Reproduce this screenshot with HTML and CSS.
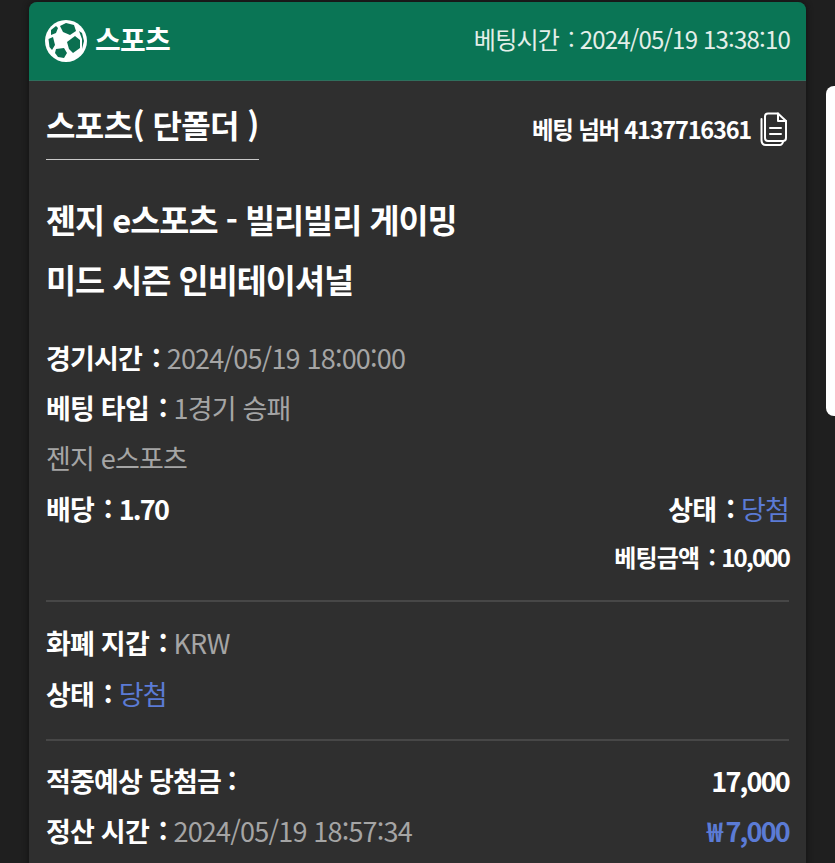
FILE: index.html
```html
<!doctype html>
<html lang="ko">
<head>
<meta charset="utf-8">
<title>베팅 내역</title>
<link rel="stylesheet" href="styles.css">
</head>
<body>
<div class="side-panel"></div>
<div class="card">
  <div class="card-head">
    <div class="brand">
      <svg class="ball" viewBox="0 0 42 42" width="42" height="42">
        <circle cx="21" cy="21" r="21" fill="#fff"/>
        <g fill="#0b6f50">
          <path d="M15 6 L21 3 L29 5 L31 11 L25 15 L18 12 Z"/>
          <path d="M6 10 L11 6 L13 8 L11 13 L6 15 Z"/>
          <path d="M3.500 19 L8 17 L10 25 L7 30 L4.500 27 Z"/>
          <path d="M11 29 L19 28 L22 33 L19 38 L13 37 L10 33 Z"/>
          <path d="M22 22 L30 16 L35 20 L35 28 L28 33 L24 29 Z"/>
          <path d="M34 11 L37 13 L39 21 L37 29 L37 19 Z"/>
        </g>
      </svg>
      <span class="brand-name">스포츠</span>
    </div>
    <div class="bet-time">베팅시간 <span class="colon">:</span> 2024/05/19 13:38:10</div>
  </div>
  <div class="card-body">
    <div class="title-row">
      <h2 class="kind">스포츠( 단폴더 )</h2>
      <div class="bet-no">
        베팅 넘버 4137716361
        <svg class="copy" viewBox="0 0 27 34" width="27" height="34" fill="none" stroke="#fff" stroke-width="2" stroke-linejoin="round" stroke-linecap="round">
          <path d="M8 1.500 H18 L26 9 V26 Q26 29 23 29 H8 Q5 29 5 26 V4.500 Q5 1.500 8 1.500 Z"/>
          <path d="M18 1.500 V9 H26"/>
          <path d="M1.500 7 V28 Q1.500 33 6 33 H20 Q22 33 23 30"/>
          <path d="M10 16 H21 M10 22 H21"/>
        </svg>
      </div>
    </div>
    <h1 class="match">젠지 e스포츠 - 빌리빌리 게이밍<br>미드 시즌 인비테이셔널</h1>

    <div class="row"><span><b>경기시간 <span class="colon">:</span></b> <span class="val">2024/05/19 18:00:00</span></span></div>
    <div class="row"><span><b>베팅 타입 <span class="colon">:</span></b> <span class="val">1경기 승패</span></span></div>
    <div class="row"><span class="val">젠지 e스포츠</span></div>
    <div class="row between">
      <b>배당 <span class="colon">:</span> <span class="num">1.70</span></b>
      <span><b>상태 <span class="colon">:</span></b> <span class="blue">당첨</span></span>
    </div>
    <div class="row end small"><b>베팅금액 <span class="colon">:</span> <span class="num">10,000</span></b></div>

    <hr class="line first">
    <div class="row"><span><b>화폐 지갑 <span class="colon">:</span></b> <span class="val">KRW</span></span></div>
    <div class="row"><span><b>상태 <span class="colon">:</span></b> <span class="blue">당첨</span></span></div>
    <hr class="line second">
    <div class="row between"><b>적중예상 당첨금 :</b><b class="num">17,000</b></div>
    <div class="row between">
      <span><b>정산 시간 <span class="colon">:</span></b> <span class="val">2024/05/19 18:57:34</span></span>
      <b class="blue num">₩ 7,000</b>
    </div>
  </div>
</div>
</body>
</html>
```

FILE: styles.css
```css
html, body {
	margin: 0;
	height: 863px;
	overflow: hidden;
}
body {
	background: #1f1f1f;
	color: #fff;
	font-family: "Noto Sans CJK KR", "Noto Sans", sans-serif;
	font-size: 27px;
	letter-spacing: -0.8px;
}
.side-panel {
	position: absolute;
	left: 826px;
	top: 86px;
	width: 20px;
	height: 330px;
	background: #fff;
	border-radius: 8px;
}
.card {
	margin: 2px 0 0 29px;
	width: 777px;
	height: 900px;
	border-radius: 8px 8px 0 0;
	overflow: hidden;
	background: #2f2f2f;
	box-shadow: 0 0 6px #111;
}
.card-head {
	height: 78px;
	background: #0a7555;
	border-bottom: 1px solid #2f6f5d;
	display: flex;
	align-items: center;
	justify-content: space-between;
	padding: 0 16px;
}
.brand {
	display: flex;
	align-items: center;
	gap: 8px;
}
.brand-name {
	margin-bottom: 5px;
	font-size: 28px;
	font-weight: 700;
}
.bet-time {
	margin-bottom: 5px;
	font-size: 24px;
	color: #e4efe9;
}
.card-body {
	padding: 0 17px;
}
.title-row {
	display: flex;
	justify-content: space-between;
	align-items: flex-start;
	height: 119px;
}
.kind {
	margin: 20px 0 0;
	width: 213px;
	height: 58px;
	border-bottom: 1px solid #c8c8c8;
	font-size: 32px;
	font-weight: 700;
	white-space: nowrap;
	letter-spacing: -0.6px;
}
.bet-no {
	display: flex;
	align-items: center;
	gap: 9px;
	margin: 31px 2px 0 0;
	font-weight: 700;
	font-size: 23.500px;
	letter-spacing: -1.200px;
}
.match {
	margin: -11px 0 23px;
	font-size: 32.700px;
	font-weight: 700;
	line-height: 60px;
	letter-spacing: -1px;
}
.row {
	display: flex;
	align-items: center;
	height: 50.400px;
	white-space: nowrap;
}
.between { justify-content: space-between; }
.end { justify-content: flex-end; }
.small {
	font-size: 24px;
	height: 46px;
}
.colon { margin-left: 3px; }
.num { letter-spacing: -1.800px; }
.val { color: #a5a5a5; font-weight: 400; }
.blue { color: #5b7bd5; }
b { font-weight: 700; }
.line {
	margin: 0;
	border: 0;
	height: 2px;
	background: #474747;
}
.first { margin-top: 20px; margin-bottom: 16px; }
.second { margin-top: 21px; margin-bottom: 14px; }
```
